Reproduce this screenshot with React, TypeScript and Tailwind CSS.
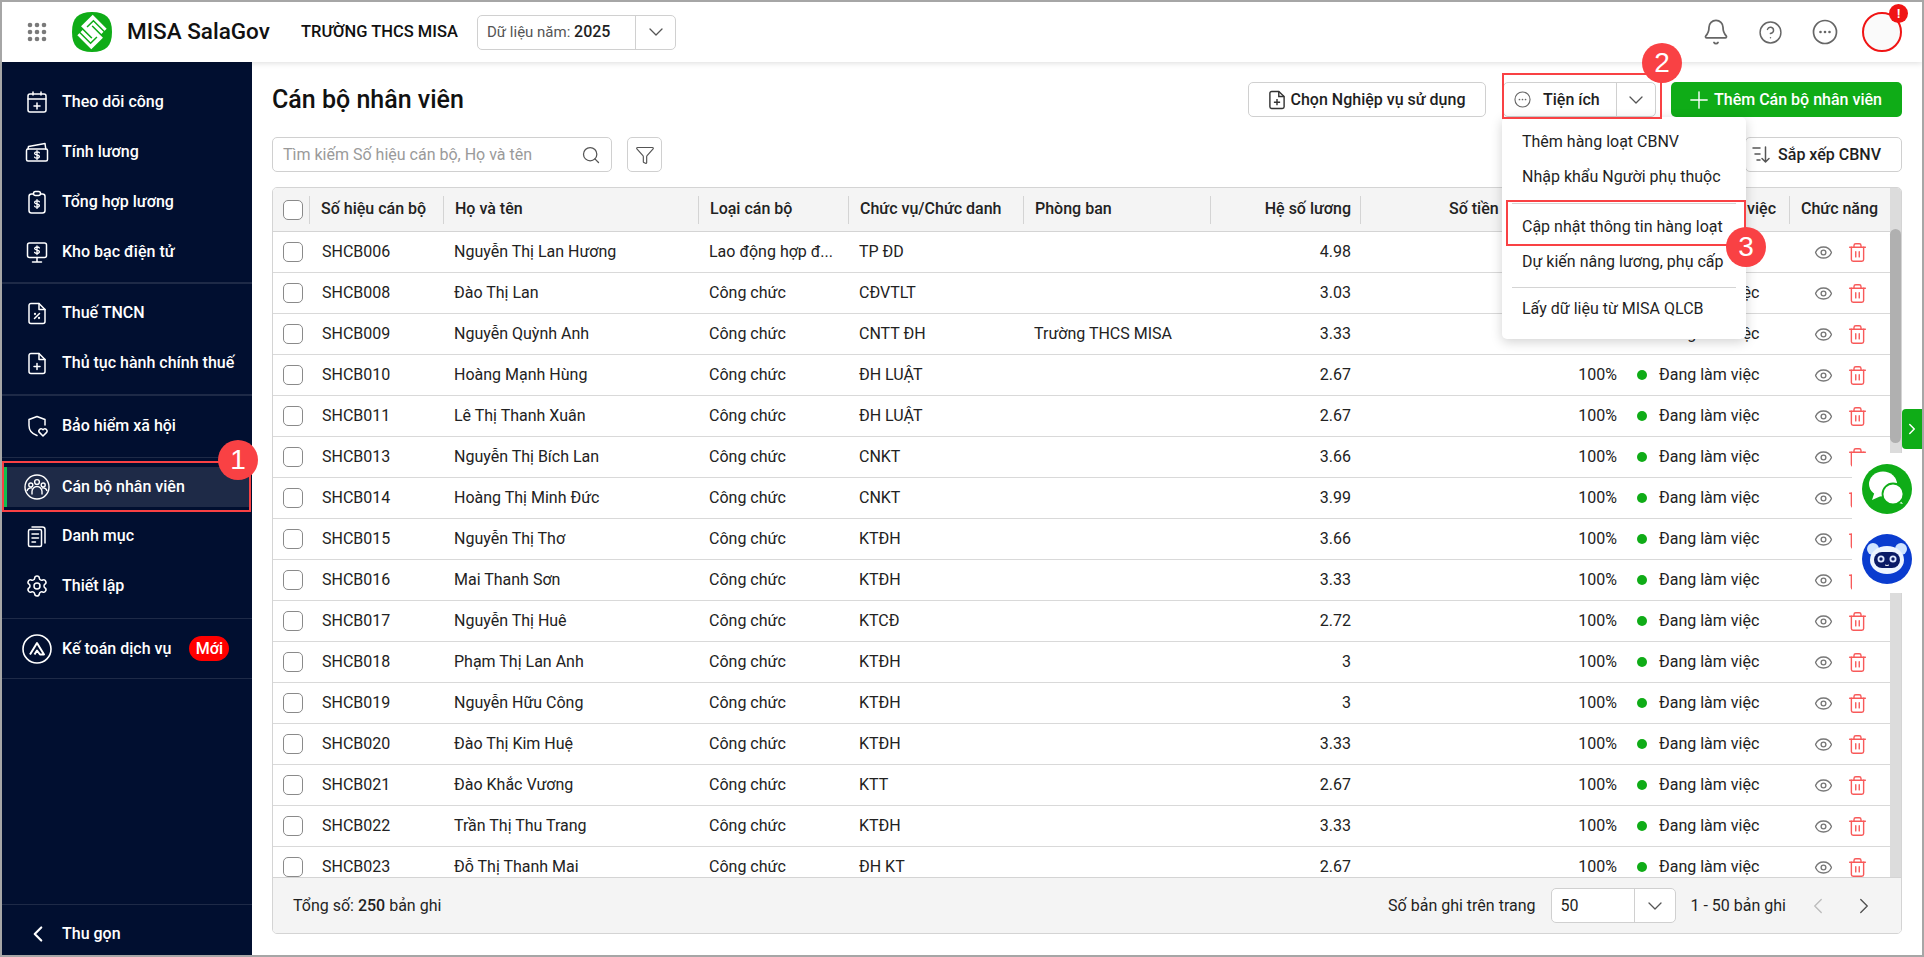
import React from "react";
import { Bell, ChevronDown, ChevronLeft, ChevronRight, CircleHelp, Eye, Filter, Plus, Search, Settings, Trash2 } from "lucide-react";

const rows = [
  ["SHCB006", "Nguyễn Thị Lan Hương", "Lao động hợp đ...", "TP ĐD", "", "4.98"],
  ["SHCB008", "Đào Thị Lan", "Công chức", "CĐVTLT", "", "3.03"],
  ["SHCB009", "Nguyễn Quỳnh Anh", "Công chức", "CNTT ĐH", "Trường THCS MISA", "3.33"],
  ["SHCB010", "Hoàng Mạnh Hùng", "Công chức", "ĐH LUẬT", "", "2.67"],
  ["SHCB011", "Lê Thị Thanh Xuân", "Công chức", "ĐH LUẬT", "", "2.67"],
  ["SHCB013", "Nguyễn Thị Bích Lan", "Công chức", "CNKT", "", "3.66"],
  ["SHCB014", "Hoàng Thị Minh Đức", "Công chức", "CNKT", "", "3.99"],
  ["SHCB015", "Nguyễn Thị Thơ", "Công chức", "KTĐH", "", "3.66"],
  ["SHCB016", "Mai Thanh Sơn", "Công chức", "KTĐH", "", "3.33"],
  ["SHCB017", "Nguyễn Thị Huê", "Công chức", "KTCĐ", "", "2.72"],
  ["SHCB018", "Phạm Thị Lan Anh", "Công chức", "KTĐH", "", "3"],
  ["SHCB019", "Nguyễn Hữu Công", "Công chức", "KTĐH", "", "3"],
  ["SHCB020", "Đào Thị Kim Huệ", "Công chức", "KTĐH", "", "3.33"],
  ["SHCB021", "Đào Khắc Vương", "Công chức", "KTT", "", "2.67"],
  ["SHCB022", "Trần Thị Thu Trang", "Công chức", "KTĐH", "", "3.33"],
  ["SHCB023", "Đỗ Thị Thanh Mai", "Công chức", "ĐH KT", "", "2.67"],
];

// sidebar icons, drawn on a 24 box
const Ico = ({ children }: { children: React.ReactNode }) => (
  <svg viewBox="0 0 24 24" className="w-6 h-6 shrink-0" fill="none" stroke="white" strokeWidth="1.5" strokeLinecap="round" strokeLinejoin="round">
    {children}
  </svg>
);

const Dollar = ({ x, y }: { x: number; y: number }) => (
  <g transform={`translate(${x} ${y})`} strokeWidth="1.3">
    <path d="M2.4 -2.2C2 -3 1 -3.2 0 -3.2C-1.4 -3.2 -2.4 -2.6 -2.4 -1.6C-2.4 .6 2.4 -.6 2.4 1.6C2.4 2.6 1.4 3.2 0 3.2C-1 3.2 -2 3 -2.4 2.2M0 -4.4V4.4" />
  </g>
);

const navTop = [
  {
    label: "Theo dõi công",
    icon: (
      <Ico>
        <rect x="3" y="4" width="18" height="18" rx="2" />
        <path d="M3 9h18M8 2v3M16 2v3M12 13v6M9 16h6" />
      </Ico>
    ),
  },
  {
    label: "Tính lương",
    icon: (
      <Ico>
        <rect x="1.5" y="9" width="21" height="12" rx="1.5" />
        <path d="M3 9l.5-2.5L20 3.500l.8 5.500" />
        <Dollar x={12} y={15} />
      </Ico>
    ),
  },
  {
    label: "Tổng hợp lương",
    icon: (
      <Ico>
        <rect x="4" y="4" width="16" height="19" rx="2.5" />
        <rect x="8.5" y="1.5" width="7" height="4" rx="2" fill="#010f30" />
        <Dollar x={12} y={14} />
      </Ico>
    ),
  },
  {
    label: "Kho bạc điện tử",
    icon: (
      <Ico>
        <rect x="2.5" y="3" width="19" height="14.5" rx="2" />
        <path d="M12 17.5V22M7.5 22h9" />
        <Dollar x={12} y={10.2} />
      </Ico>
    ),
  },
];

const navTax = [
  {
    label: "Thuế TNCN",
    icon: (
      <Ico>
        <path d="M14 2.5H6a2 2 0 0 0-2 2v16a2 2 0 0 0 2 2h12a2 2 0 0 0 2-2V8.5z" />
        <path d="M14 2.5v6h6M9.5 17.5l5-5" />
        <circle cx="10" cy="13" r=".4" />
        <circle cx="14" cy="17" r=".4" />
      </Ico>
    ),
  },
  {
    label: "Thủ tục hành chính thuế",
    icon: (
      <Ico>
        <path d="M14 2.5H6a2 2 0 0 0-2 2v16a2 2 0 0 0 2 2h12a2 2 0 0 0 2-2V8.5z" />
        <path d="M14 2.5v6h6M12 12.5v6M9 15.5h6" />
      </Ico>
    ),
  },
];

const Nav = ({ label, icon }: { label: string; icon: React.ReactNode }) => (
  <div className="h-[50px] flex items-center pl-[23px]">
    <div className="w-6 flex justify-center">{icon}</div>
    <span className="ml-[13px] text-white text-[16px] font-medium whitespace-nowrap">{label}</span>
  </div>
);

const Marker = ({ n, className }: { n: number; className: string }) => (
  <div className={`absolute w-10 h-10 rounded-full bg-[#f94144] text-white flex items-center justify-center text-[28px] font-['Liberation_Sans',sans-serif] z-30 ${className}`}>{n}</div>
);

const Check = () => <div className="w-5 h-5 rounded-[5px] border-[1.5px] border-[#8a8a8a] bg-white shrink-0" />;

const Select = ({ children, w, arrow }: { children: React.ReactNode; w: string; arrow: string }) => (
  <div className={`h-[35px] flex items-center bg-white border border-[#d0d0d0] rounded-[5px] ${w}`}>
    <div className="flex-1 px-[9px] text-[16px] text-[#1f1f1f] whitespace-nowrap">{children}</div>
    <div className={`${arrow} h-full border-l border-[#d0d0d0] flex items-center justify-center`}>
      <ChevronDown size={24} strokeWidth={1.3} color="#555" />
    </div>
  </div>
);

const HeadCell = ({ w, children, right }: { w: string; children?: React.ReactNode; right?: boolean }) => (
  <div className={`${w} shrink-0 h-7 pl-[11px] pr-[9px] pb-[2px] border-l border-[#d4d4d4] flex items-center whitespace-nowrap overflow-hidden ${right ? "justify-end" : ""}`}>{children}</div>
);

const Cell = ({ w, children, right }: { w: string; children?: React.ReactNode; right?: boolean }) => (
  <div className={`${w} shrink-0 pl-[11px] pr-[9px] flex items-center whitespace-nowrap overflow-hidden ${right ? "justify-end" : ""}`}>{children}</div>
);

const MenuItem = ({ children, className = "" }: { children: React.ReactNode; className?: string }) => (
  <div className={`h-[35px] flex items-center pl-5 text-[16px] text-[#1f1f1f] whitespace-nowrap ${className}`}>{children}</div>
);

export default function App() {
  return (
    <div className="relative w-screen h-screen overflow-hidden border-2 border-[#a6a6a6] bg-white flex flex-col text-[#1f1f1f] font-['Roboto',sans-serif]">
      {/* top bar */}
      <header className="relative z-10 h-[60px] shrink-0 bg-white shadow-[0_1px_6px_rgba(0,0,0,0.14)] flex items-center pl-[25px] pr-[20px]">
        <svg viewBox="0 0 20 20" className="w-5 h-5 shrink-0" fill="#7a7a7a">
          {[3, 10, 17].map((y) => [3, 10, 17].map((x) => <circle key={`${x}-${y}`} cx={x} cy={y} r="2.3" />))}
        </svg>
        <svg viewBox="0 0 40 40" className="w-10 h-10 ml-[25px] shrink-0">
          <path d="M20 0C34 0 40 6 40 20S34 40 20 40 0 34 0 20 6 0 20 0Z" fill="#0fac17" />
          <g transform="rotate(45 20 20)" fill="none" strokeLinejoin="miter">
            <path d="M28 11H12V20H28V29H12" stroke="white" strokeWidth="7.5" />
            <path d="M29 11H13V20M27 20V29H11" stroke="#0fac17" strokeWidth="1.5" />
          </g>
        </svg>
        <span className="ml-[15px] w-[144px] text-[22.500px] font-medium text-[#111] whitespace-nowrap">MISA SalaGov</span>
        <span className="ml-[30px] w-[156px] text-[16.500px] font-medium text-[#111] whitespace-nowrap">TRƯỜNG THCS MISA</span>
        <div className="ml-5">
          <Select w="w-[199px]" arrow="w-10">
            <span className="text-[#555] text-[15px]">Dữ liệu năm: </span>
            <span className="font-medium">2025</span>
          </Select>
        </div>
        <div className="flex-1" />
        <Bell size={28} strokeWidth={1.5} color="#666" />
        <CircleHelp size={25} strokeWidth={1.4} color="#666" className="ml-[28px]" />
        <svg viewBox="0 0 26 26" className="w-[26px] h-[26px] ml-[29px]" fill="none" stroke="#666" strokeWidth="1.7">
          <circle cx="13" cy="13" r="11.5" />
          <g fill="#666" stroke="none">
            <circle cx="8.5" cy="13" r="1.3" />
            <circle cx="13" cy="13" r="1.3" />
            <circle cx="17.5" cy="13" r="1.3" />
          </g>
        </svg>
        <div className="relative ml-[24px] w-10 h-10 rounded-full border-2 border-[#f01414] bg-[#fafafa]">
          <div className="absolute -top-[10px] left-[25px] w-[19px] h-[19px] rounded-full bg-[#f01414] text-white text-[12px] font-bold flex items-center justify-center">!</div>
        </div>
      </header>

      <div className="flex-1 flex min-h-0">
        {/* sidebar */}
        <aside className="relative w-[250px] shrink-0 bg-[#010f30] flex flex-col pt-[15px]">
          {navTop.map((n) => (
            <Nav key={n.label} {...n} />
          ))}
          <div className="mt-[5px] border-t-2 border-[#1e2a47]" />
          <div className="pt-[4px]">
            {navTax.map((n) => (
              <Nav key={n.label} {...n} />
            ))}
          </div>
          <div className="mt-[6px] border-t-2 border-[#1e2a47]" />
          <div className="pt-[5px]">
            <Nav
              label="Bảo hiểm xã hội"
              icon={
                <Ico>
                  <path d="M12 2.5 4 5.5v6c0 5 3.5 8.5 8 10M12 2.5l8 3V11" />
                  <path d="M18 22l-3.6-3.6a2.2 2.2 0 0 1 3.100-3.100l.5.5.5-.5a2.2 2.2 0 0 1 3.100 3.100z" />
                </Ico>
              }
            />
          </div>
          <div className="mt-[6px] border-t border-[#1e2a47]" />
          <div className="mt-[9px] h-10 bg-[#1e2a47] flex items-center mr-[2px]">
            <div className="w-[5px] h-full bg-[#10c050]" />
            <div className="w-[18px]" />
            <div className="w-6 flex justify-center">
              <svg viewBox="0 0 26 26" className="w-[26px] h-[26px] shrink-0" fill="none" stroke="white" strokeWidth="1.4">
                <circle cx="13" cy="13" r="12" />
                <circle cx="13" cy="8" r="2.4" />
                <circle cx="6.8" cy="11" r="2" />
                <circle cx="19.2" cy="11" r="2" />
                <path d="M8 20.5v-3a5 5 0 0 1 10 0v3M3 17a4 4 0 0 1 5-3M23 17a4 4 0 0 0-5-3" />
              </svg>
            </div>
            <span className="ml-[13px] text-white text-[16px] font-medium whitespace-nowrap">Cán bộ nhân viên</span>
          </div>
          <div className="mt-[4px]">
            <Nav
              label="Danh mục"
              icon={
                <Ico>
                  <rect x="3.5" y="5.5" width="13" height="17" rx="1.5" />
                  <path d="M7 10h6.5M7 14h6.5M7 18h3.5M7 3h10.5a2.5 2.5 0 0 1 2.5 2.5V19" />
                </Ico>
              }
            />
            <Nav label="Thiết lập" icon={<Settings size={24} color="white" strokeWidth={1.5} />} />
          </div>
          <div className="mt-[7px] border-t border-[#1e2a47]" />
          <div className="h-[59px] flex items-center pl-[20px]">
            <svg viewBox="0 0 30 30" className="w-[30px] h-[30px] shrink-0" fill="none" stroke="white" strokeWidth="1.6">
              <circle cx="15" cy="15" r="14" />
              <path d="M8 20.5 15 9l7 11.5H18l-3-4-2.5 4" strokeWidth="2" strokeLinejoin="round" />
            </svg>
            <span className="ml-[10px] text-white text-[16px] font-medium whitespace-nowrap">Kế toán dịch vụ</span>
            <span className="ml-[18px] h-[25px] w-10 rounded-full bg-[#ff0000] text-white text-[16px] font-medium flex items-center justify-center">Mới</span>
          </div>
          <div className="border-t border-[#1e2a47]" />
          <div className="flex-1" />
          <div className="h-[51px] border-t border-[#1e2a47] flex items-center pl-[23px] pt-[8px]">
            <ChevronLeft size={26} color="white" strokeWidth={2} />
            <span className="ml-[11px] text-white text-[16px] font-medium">Thu gọn</span>
          </div>
        </aside>

        {/* content */}
        <main className="flex-1 min-w-0 flex flex-col pl-5 pr-5 pt-5 pb-[21px]">
          <div className="h-[35px] shrink-0 flex items-center">
            <h1 className="text-[25px] font-medium text-[#111]">Cán bộ nhân viên</h1>
            <div className="flex-1" />
            <button className="w-[238px] h-[35px] bg-white border border-[#d0d0d0] rounded-[5px] flex items-center justify-center gap-1.5 text-[16px] font-medium">
              <svg viewBox="0 0 18 22" className="w-4 h-5" fill="none" stroke="#333" strokeWidth="1.6">
                <path d="M11 1.5H3a2 2 0 0 0-2 2v15a2 2 0 0 0 2 2h12a2 2 0 0 0 2-2V7z" />
                <path d="M11 1.5V7h6M9 10v7M5.5 13.5h7" />
              </svg>
              Chọn Nghiệp vụ sử dụng
            </button>
            <div className="ml-[17px] w-[153px] h-[35px] bg-white border border-[#d0d0d0] rounded-[5px] flex items-center">
              <div className="flex-1 flex items-center pl-[10px] text-[16px] font-medium">
                <svg viewBox="0 0 18 18" className="w-[17px] h-[17px]" fill="none" stroke="#666" strokeWidth="1.2">
                  <circle cx="9" cy="9" r="8" />
                  <g fill="#666" stroke="none">
                    <circle cx="5.8" cy="9" r=".9" />
                    <circle cx="9" cy="9" r=".9" />
                    <circle cx="12.2" cy="9" r=".9" />
                  </g>
                </svg>
                <span className="ml-[12px]">Tiện ích</span>
              </div>
              <div className="w-[39px] h-full border-l border-[#d0d0d0] flex items-center justify-center">
                <ChevronDown size={24} strokeWidth={1.3} color="#555" />
              </div>
            </div>
            <button className="ml-[15px] w-[231px] h-[35px] bg-[#0fac17] rounded-[5px] flex items-center justify-center gap-[1px] pr-[6px] text-white text-[16px] font-medium">
              <Plus size={28} strokeWidth={1.2} />
              Thêm Cán bộ nhân viên
            </button>
          </div>

          <div className="mt-5 h-[35px] shrink-0 flex items-center">
            <div className="w-[340px] h-[35px] bg-white border border-[#d0d0d0] rounded-[5px] flex items-center px-[10px] text-[16px] text-[#9a9a9a]">
              <span className="flex-1 whitespace-nowrap">Tìm kiếm Số hiệu cán bộ, Họ và tên</span>
              <Search size={20} strokeWidth={1.5} color="#555" />
            </div>
            <div className="ml-[15px] w-[35px] h-[35px] border border-[#d0d0d0] rounded-[5px] flex items-center justify-center">
              <Filter size={20} strokeWidth={1.4} color="#555" />
            </div>
            <div className="flex-1" />
            <button className="w-[157px] h-[35px] bg-white border border-[#d0d0d0] rounded-[5px] flex items-center justify-end gap-1.5 pr-[20px] text-[16px] font-medium">
              <svg viewBox="0 0 20 20" className="w-5 h-5" fill="none" stroke="#555" strokeWidth="1.5" strokeLinecap="round">
                <path d="M1 3h7M3 9h5M5 15h3" />
                <path d="M13.500 2v15M10 13.500l3.500 3.500 3.500-3.500" />
              </svg>
              Sắp xếp CBNV
            </button>
          </div>

          {/* table */}
          <div className="mt-[15px] flex-1 min-h-0 border border-[#d4d4d4] rounded-[5px] flex flex-col overflow-hidden text-[16px]">
            <div className="flex-1 min-h-0 flex">
              <div className="flex-1 min-w-0 flex flex-col overflow-hidden">
                <div className="h-[44px] shrink-0 bg-[#f4f4f4] border-b border-[#d4d4d4] flex items-center font-medium text-[#222]">
                  <div className="w-[36px] shrink-0 pl-[10px]">
                    <Check />
                  </div>
                  <HeadCell w="w-[134px]">Số hiệu cán bộ</HeadCell>
                  <HeadCell w="w-[255px]">Họ và tên</HeadCell>
                  <HeadCell w="w-[150px]">Loại cán bộ</HeadCell>
                  <HeadCell w="w-[175px]">Chức vụ/Chức danh</HeadCell>
                  <HeadCell w="w-[187px]">Phòng ban</HeadCell>
                  <HeadCell w="w-[150px]" right>
                    Hệ số lương
                  </HeadCell>
                  <HeadCell w="w-[266px]">
                    <span className="pl-[77px]">Số tiền</span>
                  </HeadCell>
                  <HeadCell w="w-[163px]" right>
                    <span className="pr-[4px]">Tình trạng làm việc</span>
                  </HeadCell>
                  <HeadCell w="w-[103px]">Chức năng</HeadCell>
                </div>
                {rows.map((r) => (
                  <div key={r[0]} className="h-[41px] shrink-0 border-b border-[#d9d9d9] flex items-stretch text-[#222]">
                    <div className="w-[36px] shrink-0 pl-[10px] flex items-center">
                      <Check />
                    </div>
                    <Cell w="w-[134px]">
                      <span className="pl-[2px]">{r[0]}</span>
                    </Cell>
                    <Cell w="w-[255px]">{r[1]}</Cell>
                    <Cell w="w-[150px]">{r[2]}</Cell>
                    <Cell w="w-[175px]">{r[3]}</Cell>
                    <Cell w="w-[187px]">{r[4]}</Cell>
                    <Cell w="w-[150px]" right>
                      {r[5]}
                    </Cell>
                    <Cell w="w-[266px]" right>
                      100%
                    </Cell>
                    <Cell w="w-[163px]">
                      <span className="w-[10px] h-[10px] rounded-full bg-[#0fac17] shrink-0" />
                      <span className="ml-[12px]">Đang làm việc</span>
                    </Cell>
                    <Cell w="w-[103px]">
                      <Eye size={19} strokeWidth={1.7} color="#777" className="ml-[14px] shrink-0" />
                      <Trash2 size={21} strokeWidth={1.6} color="#f85a5a" className="ml-[14px] shrink-0" />
                    </Cell>
                  </div>
                ))}
              </div>
              <div className="w-[11px] shrink-0 bg-[#dcdcdc]">
                <div className="mt-[41px] h-[214px] rounded-full bg-[#b0b0b0]" />
              </div>
            </div>
            <div className="h-[56px] shrink-0 bg-[#f4f4f4] border-t border-[#d4d4d4] flex items-center pl-[20px] pr-[24px]">
              <span>
                Tổng số: <b className="font-medium">250</b> bản ghi
              </span>
              <div className="flex-1" />
              <span>Số bản ghi trên trang</span>
              <div className="ml-[15px]">
                <Select w="w-[125px]" arrow="w-[41px]">
                  50
                </Select>
              </div>
              <span className="ml-[15px]">1 - 50 bản ghi</span>
              <ChevronLeft size={26} strokeWidth={1.3} color="#bdbdbd" className="ml-[19px]" />
              <ChevronRight size={26} strokeWidth={1.3} color="#555" className="ml-[20px]" />
            </div>
          </div>
        </main>
      </div>

      {/* Tiện ích dropdown */}
      <div className="absolute left-[1500px] top-[115px] w-[244px] h-[222px] z-20 bg-white rounded-[5px] shadow-[0_3px_12px_rgba(0,0,0,0.18)] pt-[7px]">
        <MenuItem>Thêm hàng loạt CBNV</MenuItem>
        <MenuItem>Nhập khẩu Người phụ thuộc</MenuItem>
        <div className="mx-[10px] mt-[9px] border-t border-[#d4d4d4]" />
        <MenuItem className="mt-[5px]">Cập nhật thông tin hàng loạt</MenuItem>
        <MenuItem>Dự kiến nâng lương, phụ cấp</MenuItem>
        <div className="mx-[10px] mt-[8px] border-t border-[#d4d4d4]" />
        <MenuItem className="mt-[3px]">Lấy dữ liệu từ MISA QLCB</MenuItem>
      </div>

      {/* annotations */}
      <div className="absolute left-0 top-[459px] w-[249px] h-[51px] border-2 border-[#f94144] z-20" />
      <Marker n={1} className="left-[216px] top-[438px]" />
      <div className="absolute left-[1500px] top-[71px] w-[160px] h-[46px] border-2 border-[#f94144] z-20" />
      <Marker n={2} className="left-[1640px] top-[41px]" />
      <div className="absolute left-[1504px] top-[198px] w-[240px] h-[46px] border-2 border-[#f94144] z-30" />
      <Marker n={3} className="left-[1724px] top-[225px]" />

      {/* chat widgets */}
      <div className="absolute left-[1850px] top-[451px] w-[70px] h-[140px] bg-white z-10 flex flex-col items-center pt-[11px] gap-5">
        <svg viewBox="0 0 50 50" className="w-[50px] h-[50px]">
          <circle cx="25" cy="25" r="25" fill="#0fac17" />
          <ellipse cx="21" cy="20" rx="14" ry="12.5" fill="white" />
          <path d="M13 27l-3 9 9-4z" fill="white" />
          <path d="M37 35l4 5-8-2z" fill="white" />
          <circle cx="31" cy="30" r="10.5" fill="white" stroke="#0fac17" strokeWidth="1.8" />
        </svg>
        <svg viewBox="0 0 50 50" className="w-[50px] h-[50px]">
          <circle cx="25" cy="25" r="25" fill="#0a3ccf" />
          <circle cx="11" cy="15" r="6" fill="#cfe4ff" />
          <circle cx="39" cy="15" r="6" fill="#cfe4ff" />
          <ellipse cx="25" cy="26" rx="17" ry="14" fill="#eef5ff" />
          <rect x="12" y="18" width="26" height="16" rx="8" fill="#0a1a66" />
          <circle cx="19" cy="25" r="3.5" fill="#dfe8ff" />
          <circle cx="31" cy="25" r="3.5" fill="#dfe8ff" />
          <circle cx="19" cy="25" r="1.7" fill="#0a1a66" />
          <circle cx="31" cy="25" r="1.7" fill="#0a1a66" />
          <path d="M23 31q2 1 4 0" stroke="white" strokeWidth="1" fill="none" />
        </svg>
      </div>
      <div className="absolute left-[1900px] top-[407px] w-5 h-10 z-20 bg-[#0fac17] rounded-l-[4px] flex items-center justify-center">
        <ChevronRight size={18} strokeWidth={2} color="white" />
      </div>
    </div>
  );
}
